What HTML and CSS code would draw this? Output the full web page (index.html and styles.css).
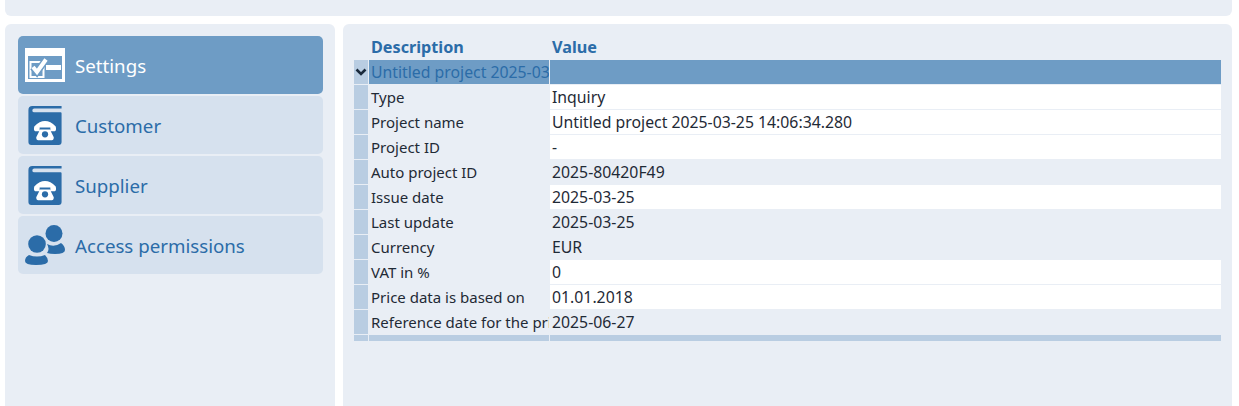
FILE: index.html
```html
<!DOCTYPE html>
<html lang="en">
<head>
<meta charset="utf-8">
<title>Project settings</title>
<link rel="stylesheet" href="styles.css">
</head>
<body>
<div class="topbar"></div>
<div class="main">
  <nav class="side">
    <div class="nav active">
      <svg class="ico" viewBox="0 0 40 34"><path fill="#fff" fill-rule="evenodd" d="M0 0H40V34H0ZM3 8V31H37V8Z"/><path fill="none" stroke="#fff" stroke-width="2" d="M5.500 14H18.500V29H5.500Z"/><path fill="none" stroke="#6e9cc5" stroke-width="7" d="M8 19L12 24L21 11.500"/><path fill="none" stroke="#fff" stroke-width="4" d="M8 19L12 24L21 11.500"/><rect x="21" y="17" width="15" height="5" fill="#fff"/></svg>
      <span>Settings</span>
    </div>
    <div class="nav">
      <svg class="ico phone" viewBox="0 0 34 40"><path fill="#2b6ca8" fill-rule="evenodd" d="M4 0H34V2.500H6Q4 2.500 4 4.500Q4 6.500 6 6.500H33Q34 6.500 34 7.500V37Q34 40 31 40H3Q0 40 0 37V4Q0 0 4 0Z"/><path fill="#fff" d="M6 21Q17 10 28 21Q29 25 27 26H22.500V22H11.500V26H7Q5 25 6 21ZM12 24H22L26 32Q26 35 24 35H10Q8 35 8 32Z"/><circle cx="17" cy="29" r="3.200" fill="#2b6ca8"/></svg>
      <span>Customer</span>
    </div>
    <div class="nav">
      <svg class="ico phone" viewBox="0 0 34 40"><path fill="#2b6ca8" fill-rule="evenodd" d="M4 0H34V2.500H6Q4 2.500 4 4.500Q4 6.500 6 6.500H33Q34 6.500 34 7.500V37Q34 40 31 40H3Q0 40 0 37V4Q0 0 4 0Z"/><path fill="#fff" d="M6 21Q17 10 28 21Q29 25 27 26H22.500V22H11.500V26H7Q5 25 6 21ZM12 24H22L26 32Q26 35 24 35H10Q8 35 8 32Z"/><circle cx="17" cy="29" r="3.200" fill="#2b6ca8"/></svg>
      <span>Supplier</span>
    </div>
    <div class="nav">
      <svg class="ico" viewBox="0 0 40 40"><circle cx="29" cy="8.500" r="8.500" fill="#2b6ca8"/><path fill="#2b6ca8" d="M22 19Q29 23 36 18Q40 21 40 25Q40 29 30 29Q25 29 22 28Q25 24 22 19Z"/><circle cx="12" cy="19" r="8.800" fill="#2b6ca8"/><path fill="#2b6ca8" d="M4 30Q12 33 20 30Q23 33 23 36Q23 40 11 40Q0 40 0 36Q0 32 4 30Z"/></svg>
      <span>Access permissions</span>
    </div>
  </nav>
  <section class="content">
    <div class="thead"><div class="hgap"></div><div class="cell cd">Description</div><div class="cell cv">Value</div></div>
    <div class="row group"><div class="ind"><svg class="chev" viewBox="0 0 12 8"><path fill="none" stroke="#1a2a3c" stroke-width="2.600" d="M1.500 1.500L6 6L10.500 1.500"/></svg></div><div class="cell cd">Untitled project 2025-03-25 14:06:34.280</div><div class="cell cv"></div></div>
    <div class="row white"><div class="ind"></div><div class="cell cd">Type</div><div class="cell cv">Inquiry</div></div>
    <div class="row white"><div class="ind"></div><div class="cell cd">Project name</div><div class="cell cv">Untitled project 2025-03-25 14:06:34.280</div></div>
    <div class="row white"><div class="ind"></div><div class="cell cd">Project ID</div><div class="cell cv">-</div></div>
    <div class="row"><div class="ind"></div><div class="cell cd">Auto project ID</div><div class="cell cv">2025-80420F49</div></div>
    <div class="row white"><div class="ind"></div><div class="cell cd">Issue date</div><div class="cell cv">2025-03-25</div></div>
    <div class="row"><div class="ind"></div><div class="cell cd">Last update</div><div class="cell cv">2025-03-25</div></div>
    <div class="row"><div class="ind"></div><div class="cell cd">Currency</div><div class="cell cv">EUR</div></div>
    <div class="row white"><div class="ind"></div><div class="cell cd">VAT in %</div><div class="cell cv">0</div></div>
    <div class="row white"><div class="ind"></div><div class="cell cd">Price data is based on</div><div class="cell cv">01.01.2018</div></div>
    <div class="row"><div class="ind"></div><div class="cell cd">Reference date for the price data</div><div class="cell cv">2025-06-27</div></div>
    <div class="foot"><div class="ind"></div><div class="cell cd"></div><div class="cell cv"></div></div>
  </section>
</div>
</body>
</html>
```
FILE: styles.css
```css
html, body { margin: 0; padding: 0; height: 406px; overflow: hidden; background: #fff; }
body { padding: 0 7px 0 5px; box-sizing: border-box; font-family: "Noto Sans", Tahoma, sans-serif; color: #1f2a36; }
.topbar { height: 16px; background: #e9eef5; border-radius: 0 0 6px 6px; }
.main { display: flex; gap: 8px; margin-top: 8px; height: 382px; }
.side { width: 330px; flex: none; box-sizing: border-box; padding: 12px 12px 0 13px; background: #e9eef5; border-radius: 6px 6px 0 0; display: flex; flex-direction: column; gap: 2px; }
.nav { height: 58px; background: #d6e1ee; border-radius: 5px; display: flex; align-items: center; gap: 10px; padding-left: 7px; color: #2b6ca8; font-size: 18.700px; }
.nav.active { background: #6e9cc5; color: #fff; }
.ico { width: 40px; height: 40px; flex: none; }
.nav.active .ico { height: 34px; }
.ico.phone { width: 34px; height: 39px; margin: 0 3px; }
.content { flex: 1; box-sizing: border-box; padding: 11px 11px 0 11px; background: #e9eef5; border-radius: 6px 6px 0 0; font-size: 15px; }
.thead, .row, .foot { display: flex; }
.thead { height: 25px; padding-bottom: 2px; box-sizing: border-box; align-items: center; font-weight: bold; font-size: 16.200px; color: #2b6ca8; }
.hgap { width: 15px; flex: none; }
.row { height: 24px; margin-bottom: 1px; align-items: stretch; }
.ind { width: 14px; margin-right: 1px; flex: none; background: #b9cde2; display: flex; align-items: center; justify-content: center; }
.cell { box-sizing: border-box; padding-left: 2px; display: flex; align-items: center; white-space: nowrap; overflow: hidden; }
.cd { width: 180px; margin-right: 1px; flex: none; }
.cv { flex: 1; }
.row .cv { font-size: 15.800px; }
.row.white .cv { background: #fff; }
.group .cd, .group .cv { background: #6e9cc5; }
.group .cd { color: #2b6ca8; font-size: 15.800px; }
.chev { width: 12px; height: 8px; }
.foot { height: 6px; }
.foot .cd, .foot .cv { background: #b9cde2; }
```
